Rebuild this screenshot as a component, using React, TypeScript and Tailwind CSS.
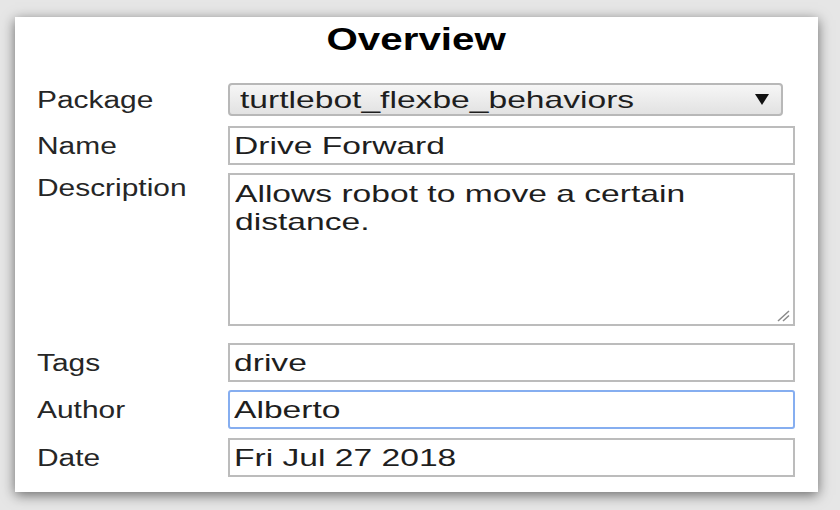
import React from "react";

const font = { fontFamily: '"Liberation Sans", Arial, sans-serif' };

function Label({ text, extra }: { text: string; extra?: string }) {
  return (
    <div className={"w-[191px] shrink-0 text-[23px] leading-[28px] text-[#262626] " + (extra ?? "")}>
      <span className="inline-block origin-left scale-x-[1.3]">{text}</span>
    </div>
  );
}

function Field({ value, focused }: { value: string; focused?: boolean }) {
  return (
    <div
      className={
        focused
          ? "h-[39px] w-[567px] border-2 border-[#86aef0] rounded-[3px] bg-white px-[4px] text-[24px] leading-[35px] text-[#1e1e1e]"
          : "h-[39px] w-[567px] border-2 border-[#bcbcbc] bg-white px-[4px] text-[24px] leading-[35px] text-[#1e1e1e]"
      }
    >
      <span className="inline-block origin-left scale-x-[1.4] whitespace-nowrap">{value}</span>
    </div>
  );
}

export default function App() {
  return (
    <div style={font} className="w-[840px] h-[510px] bg-[#e6e6e6] pt-[17px] pl-[15px]">
      <div className="w-[803px] h-[475px] bg-white shadow-[0_3px_12px_rgba(0,0,0,0.55)] pl-[22px] pt-[2px]">
        <div className="h-[40px] leading-[40px] text-center text-[32px] font-bold text-black pr-[22px] mb-[24px]">
          <span className="inline-block scale-x-[1.26]">Overview</span>
        </div>

        <div className="flex items-baseline">
          <Label text="Package" />
          <div className="h-[33px] w-[555px] border-2 border-[#b8b8b8] rounded-[4px] bg-gradient-to-b from-[#f6f6f6] to-[#e2e2e2] px-[10px] flex items-center justify-between text-[24px] text-[#1e1e1e]">
            <span className="inline-block origin-left scale-x-[1.4] whitespace-nowrap">turtlebot_flexbe_behaviors</span>
            <svg width="14" height="11" viewBox="0 0 14 11" className="mr-[2px]">
              <path d="M0 0 H14 L7 11 Z" fill="#111" />
            </svg>
          </div>
        </div>

        <div className="flex items-baseline mt-[10px]">
          <Label text="Name" />
          <Field value="Drive Forward" />
        </div>

        <div className="flex items-start mt-[8px]">
          <Label text="Description" extra="pt-[1px]" />
          <div className="relative h-[153px] w-[567px] border-2 border-[#bcbcbc] bg-white px-[5px] pt-[5px] text-[24px] leading-[28px] text-[#1e1e1e]">
            <span className="inline-block origin-left scale-x-[1.4] whitespace-nowrap">Allows robot to move a certain</span>
            <br />
            <span className="inline-block origin-left scale-x-[1.4] whitespace-nowrap">distance.</span>
            <svg width="14" height="12" viewBox="0 0 14 12" className="absolute right-[2px] bottom-[2px]">
              <path d="M1 11 L12 1 M6 11 L12 5.5" stroke="#8a8a8a" strokeWidth="1.5" fill="none" />
            </svg>
          </div>
        </div>

        <div className="flex items-baseline mt-[17px]">
          <Label text="Tags" />
          <Field value="drive" />
        </div>

        <div className="flex items-baseline mt-[8px]">
          <Label text="Author" />
          <Field value="Alberto" focused />
        </div>

        <div className="flex items-baseline mt-[9px]">
          <Label text="Date" />
          <Field value="Fri Jul 27 2018" />
        </div>
      </div>
    </div>
  );
}
